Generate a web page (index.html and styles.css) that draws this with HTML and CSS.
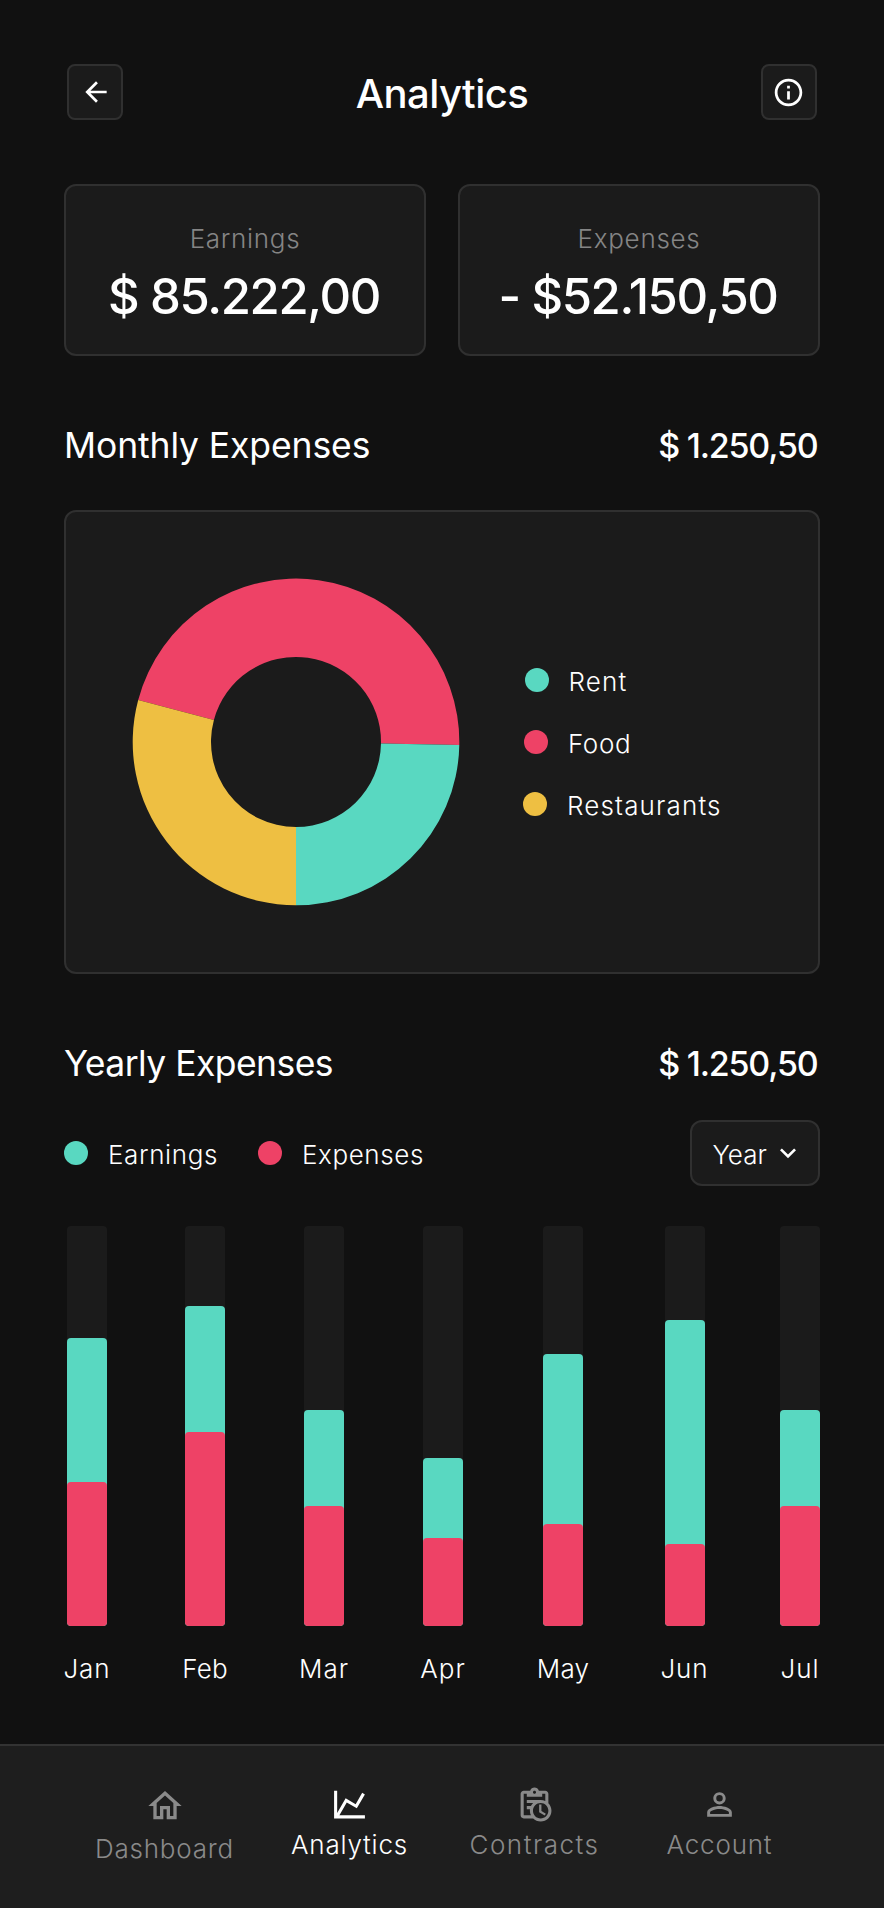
FILE: index.html
```
<!DOCTYPE html>
<html lang="en">
<head>
<meta charset="utf-8">
<title>Analytics</title>
<link rel="stylesheet" href="styles.css">
</head>
<body>
<main class="screen">
  <header class="topbar">
    <button class="icon-button" aria-label="Back">
      <svg class="icon-back" viewBox="0 0 24 24"><path d="M20 11H7.83l5.59-5.59L12 4l-8 8 8 8 1.41-1.41L7.83 13H20z"/></svg>
    </button>
    <h1 class="title">Analytics</h1>
    <button class="icon-button" aria-label="Information">
      <svg class="icon-info" viewBox="0 0 24 24"><path d="M11 7h2v2h-2zm0 4h2v6h-2zm1-9C6.48 2 2 6.48 2 12s4.48 10 10 10 10-4.48 10-10S17.52 2 12 2zm0 18c-4.41 0-8-3.59-8-8s3.59-8 8-8 8 3.59 8 8-3.59 8-8 8z"/></svg>
    </button>
  </header>

  <section class="summary">
    <div class="stat"><span class="stat-label">Earnings</span><strong class="stat-value">$ 85.222,00</strong></div>
    <div class="stat"><span class="stat-label">Expenses</span><strong class="stat-value">- $52.150,50</strong></div>
  </section>

  <div class="section-head"><h2 class="section-title">Monthly Expenses</h2><span class="section-total">$ 1.250,50</span></div>
  <section class="panel">
    <svg class="donut" viewBox="-164 -164 328 328">
      <path class="fill-pink" d="M-157.8-42A163.3 163.3 0 0 1 163.3 3L85 1.6A85 85 0 0 0-82.1-22z"/>
      <path class="fill-teal" d="M163.3 3A163.3 163.3 0 0 1 0 163.3V85A85 85 0 0 0 85 1.6z"/>
      <path class="fill-yellow" d="M0 163.3A163.3 163.3 0 0 1-157.8-42L-82.1-22A85 85 0 0 0 0 85z"/>
    </svg>
    <ul class="categories">
      <li class="key key-rent"><i class="dot teal"></i><span class="key-text wide">Rent</span></li>
      <li class="key key-food"><i class="dot pink"></i><span class="key-text">Food</span></li>
      <li class="key"><i class="dot yellow"></i><span class="key-text wide">Restaurants</span></li>
    </ul>
  </section>

  <div class="section-head"><h2 class="section-title yearly">Yearly Expenses</h2><span class="section-total">$ 1.250,50</span></div>
  <div class="filters">
    <ul class="series">
      <li class="key"><i class="dot teal"></i><span class="key-text">Earnings</span></li>
      <li class="key"><i class="dot pink"></i><span class="key-text">Expenses</span></li>
    </ul>
    <button class="select"><span class="select-text">Year</span>
      <svg class="icon-chevron" viewBox="0 0 24 24"><path d="M7.41 8.59 12 13.17l4.59-4.58L18 10l-6 6-6-6z"/></svg>
    </button>
  </div>

  <section class="chart">
    <div class="month"><div class="track"><div class="bar teal" style="height:288px"><div class="bar pink" style="height:144px"></div></div></div><span class="month-name">Jan</span></div>
    <div class="month"><div class="track"><div class="bar teal" style="height:320px"><div class="bar pink" style="height:194px"></div></div></div><span class="month-name tight">Feb</span></div>
    <div class="month"><div class="track"><div class="bar teal" style="height:216px"><div class="bar pink" style="height:120px"></div></div></div><span class="month-name">Mar</span></div>
    <div class="month"><div class="track"><div class="bar teal" style="height:168px"><div class="bar pink" style="height:88px"></div></div></div><span class="month-name">Apr</span></div>
    <div class="month"><div class="track"><div class="bar teal" style="height:272px"><div class="bar pink" style="height:102px"></div></div></div><span class="month-name tight">May</span></div>
    <div class="month"><div class="track"><div class="bar teal" style="height:306px"><div class="bar pink" style="height:82px"></div></div></div><span class="month-name">Jun</span></div>
    <div class="month"><div class="track"><div class="bar teal" style="height:216px"><div class="bar pink" style="height:120px"></div></div></div><span class="month-name">Jul</span></div>
  </section>
</main>

<nav class="tabs">
  <a class="tab tab-home">
    <svg class="tab-icon" viewBox="0 0 24 24"><path d="M12 5.69l5 4.5V18h-2v-6H9v6H7v-7.81l5-4.5M12 3L2 12h3v8h6v-6h2v6h6v-8h3z"/></svg>
    <span>Dashboard</span>
  </a>
  <a class="tab active">
    <svg class="tab-icon" viewBox="0 0 24 24"><path d="M16 11.78l4.24-7.33 1.73 1L16.74 14.5l-6.51-3.75L5.46 19H22v2H2V3h2v14.54L9.5 8z"/></svg>
    <span>Analytics</span>
  </a>
  <a class="tab tab-contracts">
    <svg class="tab-icon" viewBox="0 0 24 24"><path d="M21 11.11V5c0-1.1-.89-2-2-2h-4.18C14.4 1.84 13.3 1 12 1s-2.4.84-2.82 2H5c-1.1 0-2 .9-2 2v14c0 1.11.9 2 2 2h6.11c1.26 1.24 2.98 2 4.89 2 3.87 0 7-3.13 7-7 0-1.91-.76-3.63-2-4.89M12 3c.55 0 1 .45 1 1s-.45 1-1 1-1-.45-1-1 .45-1 1-1M5 19V5h2v2h10V5h2v4.68c-.91-.43-1.92-.68-3-.68H7v2h4.1c-.6.57-1.06 1.25-1.42 2H7v2h2.08c-.05.33-.08.66-.08 1 0 1.08.25 2.09.68 3H5m11 2c-2.76 0-5-2.24-5-5s2.24-5 5-5 5 2.24 5 5-2.24 5-5 5m.5-4.75l2.86 1.69-.75 1.22L15 17v-5h1.5z"/></svg>
    <span>Contracts</span>
  </a>
  <a class="tab">
    <svg class="tab-icon" viewBox="0 0 24 24"><path d="M12 5.9a2.1 2.1 0 1 1 0 4.2 2.1 2.1 0 0 1 0-4.2m0 9c2.97 0 6.1 1.46 6.1 2.1v1.1H5.9V17c0-.64 3.13-2.1 6.1-2.1M12 4C9.79 4 8 5.79 8 8s1.79 4 4 4 4-1.79 4-4-1.79-4-4-4zm0 9c-2.67 0-8 1.34-8 4v3h16v-3c0-2.66-5.33-4-8-4z"/></svg>
    <span>Account</span>
  </a>
</nav>
</body>
</html>
```
FILE: styles.css
```
* { box-sizing: border-box; }

body {
  margin: 0;
  min-height: 1908px;
  display: flex;
  flex-direction: column;
  background: #111;
  color: #fff;
  font-family: Inter, "Liberation Sans", sans-serif;
  font-weight: 300;
  font-size: 26px;
  line-height: 32px;
}

h1, h2, ul { margin: 0; padding: 0; }
ul { list-style: none; }
svg { display: block; fill: currentColor; flex: none; }
button { font: inherit; color: inherit; padding: 0; }

.teal { background: #59d8c1; }
.pink { background: #ee4266; }
.yellow { background: #eebf42; }
.fill-teal { fill: #59d8c1; }
.fill-pink { fill: #ee4266; }
.fill-yellow { fill: #eebf42; }

.screen { flex: 1; padding: 64px 64px 0; }

/* Top bar */
.topbar {
  height: 56px;
  padding: 0 3px;
  display: flex;
  align-items: center;
  justify-content: space-between;
}
.icon-button {
  width: 56px;
  height: 56px;
  display: grid;
  place-items: center;
  background: #1b1b1b;
  border: 2px solid #303030;
  border-radius: 8px;
}
.icon-back { width: 32px; height: 32px; margin-left: 1px; }
.icon-info { width: 33px; height: 33px; margin-right: 1px; }
.title {
  padding-top: 3px;
  font-size: 40px;
  font-weight: 500;
  line-height: 48px;
  letter-spacing: -0.55px;
}

/* Summary cards */
.summary {
  margin-top: 64px;
  display: grid;
  grid-template-columns: 1fr 1fr;
  gap: 32px;
}
.stat {
  height: 172px;
  padding-top: 37px;
  display: flex;
  flex-direction: column;
  align-items: center;
  gap: 12px;
  background: #1b1b1b;
  border: 2px solid #303030;
  border-radius: 12px;
}
.stat-label { color: #858585; letter-spacing: 0.7px; }
.stat-value {
  padding-right: 2px;
  font-size: 49px;
  font-weight: 500;
  line-height: 60px;
  letter-spacing: -1.36px;
  white-space: nowrap;
}

/* Section headings */
.section-head {
  margin-top: 68px;
  padding-right: 2.5px;
  display: flex;
  align-items: baseline;
  justify-content: space-between;
  line-height: 44px;
}
.section-title { font-size: 35.5px; font-weight: 400; letter-spacing: -0.1px; }
.section-title.yearly { letter-spacing: -0.55px; }
.section-total { font-size: 34px; font-weight: 500; letter-spacing: -1.2px; }

/* Donut panel */
.panel {
  height: 464px;
  margin-top: 42px;
  padding-left: 66px;
  display: flex;
  align-items: center;
  gap: 63px;
  background: #1b1b1b;
  border: 2px solid #303030;
  border-radius: 12px;
}
.donut { width: 328px; height: 328px; }
.categories { display: grid; gap: 30px; }
.key { display: flex; align-items: center; gap: 20px; height: 32px; }
.key-rent { padding-left: 1.5px; }
.key-food { padding-left: 1px; }
.dot { width: 24px; height: 24px; border-radius: 50%; flex: none; }
.key-text { padding-top: 3px; letter-spacing: 0.6px; }
.key-text.wide { letter-spacing: 1.15px; }

/* Yearly filters */
.filters {
  height: 66px;
  margin-top: 34px;
  display: flex;
  align-items: center;
  justify-content: space-between;
}
.series { display: flex; gap: 40px; }
.select {
  width: 130px;
  height: 66px;
  padding: 0 14px 0 20.5px;
  display: flex;
  align-items: center;
  justify-content: space-between;
  background: #1b1b1b;
  border: 2px solid #303030;
  border-radius: 12px;
}
.select-text { padding-top: 3px; letter-spacing: 0; }
.icon-chevron { width: 32px; height: 32px; }

/* Bar chart */
.chart {
  margin-top: 40px;
  padding-left: 3px;
  display: grid;
  grid-template-columns: 118px 119px 119px 120px 121.5px 115.5px 40px;
}
.month {
  width: 40px;
  display: flex;
  flex-direction: column;
  align-items: center;
  gap: 27px;
}
.track {
  width: 40px;
  height: 400px;
  display: flex;
  align-items: flex-end;
  background: #1b1b1b;
  border-radius: 4px;
}
.bar {
  width: 100%;
  display: flex;
  align-items: flex-end;
  border-radius: 4px;
}
.month-name { letter-spacing: 0.95px; }
.month-name.tight { letter-spacing: 0.2px; }

/* Bottom navigation */
.tabs {
  height: 164px;
  padding: 39.5px 72px 0;
  display: grid;
  grid-template-columns: repeat(4, 1fr);
  background: #1e1e1e;
  border-top: 2px solid #333;
  color: #8a8a8a;
}
.tab {
  display: flex;
  flex-direction: column;
  align-items: center;
  gap: 6px;
  letter-spacing: 0.8px;
}
.tab.active { color: #fff; }
.tab-icon { width: 37px; height: 37px; }
.tab-home { gap: 7px; }
.tab-home .tab-icon { width: 40px; height: 40px; }
.tab-contracts { letter-spacing: 1.5px; }
```
